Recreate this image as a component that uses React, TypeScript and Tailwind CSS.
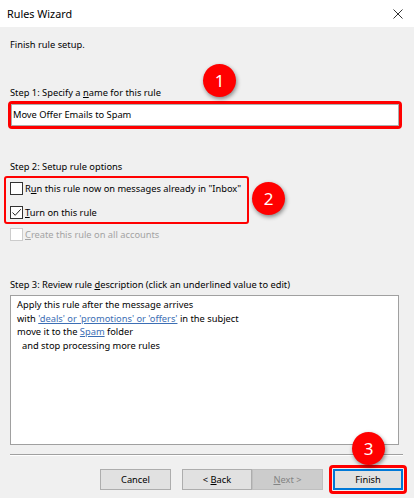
export default function App() {
  return (
    <div className="relative w-[414px] h-[498px] overflow-hidden bg-[#f0f0f0] font-['Noto_Sans',sans-serif] text-[9.3px] leading-[16px] text-black">
      <header className="h-[27px] bg-white flex items-center justify-between pl-[7px] pr-[11px] text-[10.8px]">
        <span>Rules Wizard</span>
        <svg width="10" height="10" viewBox="0 0 10 10" className="mt-[1px]">
          <path d="M0.5 0.5L9.5 9.5M9.5 0.5L0.5 9.5" stroke="#333" strokeWidth="1" fill="none" />
        </svg>
      </header>

      <div className="px-[10px] whitespace-nowrap">
        <p className="mt-[10px]">Finish rule setup.</p>

        <p className="mt-[32px]">
          Step 1: Specify a <span className="underline">n</span>ame for this rule
        </p>
        <div className="-ml-[2px] mr-[2px] border-[3px] border-[#ff0000] rounded-[4px]">
          <div className="h-[22px] bg-white border border-[#adadad] flex items-center px-[1px]">
            Move Offer Emails to Spam
          </div>
        </div>

        <p className="mt-[30px]">Step 2: Setup rule options</p>
        <div className="mt-[1px] -ml-[6px] w-[245px] border-2 border-[#ff0000] rounded-[3px] pt-[4px] pb-[3px] pl-[4px] flex flex-col gap-[11px]">
          <CheckRow label={<>R<span className="underline">u</span>n this rule now on messages already in "Inbox"</>} />
          <CheckRow checked label={<><span className="underline">T</span>urn on this rule</>} />
        </div>
        <div className="mt-[4px]">
          <CheckRow disabled label={<><span className="underline">C</span>reate this rule on all accounts</>} />
        </div>

        <p className="mt-[36px]">
          Step 3: Review rule <span className="underline">d</span>escription (click an underlined value to edit)
        </p>
        <div className="mt-[2px] mr-[5px] h-[150px] bg-white border border-[#a0a0a0] pl-[6px] pt-[2px] leading-[13.5px]">
          <p>Apply this rule after the message arrives</p>
          <p>
            with <span className="text-[#3c6eb4] underline">'deals' or 'promotions' or 'offers'</span> in the subject
          </p>
          <p>
            move it to the <span className="text-[#3c6eb4] underline">Spam</span> folder
          </p>
          <p className="pl-[5px]">and stop processing more rules</p>
        </div>

        <div className="mt-[9px] mr-[1px] border-t border-[#a0a0a0] border-b border-b-white" />
      </div>

      <div className="mt-[9px] flex items-start justify-end pr-[7px] whitespace-nowrap">
        <Button className="mt-[4px] w-[71px]">Cancel</Button>
        <Button className="mt-[4px] ml-[11px] w-[70px]">
          <span>
            &lt; <span className="underline">B</span>ack
          </span>
        </Button>
        <Button disabled className="mt-[4px] w-[71px]">
          <span>
            <span className="underline">N</span>ext &gt;
          </span>
        </Button>
        <div className="ml-[6px] border-[3px] border-[#ff0000] rounded-[4px] p-[1px]">
          <button className="w-[70px] h-[21px] bg-[#e1e1e1] border-2 border-[#0078d7] flex items-center justify-center">
            Finish
          </button>
        </div>
      </div>

      <Badge n="1" className="left-[203px] top-[64px]" />
      <Badge n="2" className="left-[252px] top-[182px]" />
      <Badge n="3" className="left-[352px] top-[432px]" />
    </div>
  );
}

function CheckRow({
  label,
  checked = false,
  disabled = false,
}: {
  label: React.ReactNode;
  checked?: boolean;
  disabled?: boolean;
}) {
  return (
    <div className={`flex items-center h-[13px] gap-[2px] ${disabled ? "text-[#a3a3a3]" : ""}`}>
      <span
        className={`w-[13px] h-[13px] shrink-0 bg-white border ${disabled ? "border-[#cccccc]" : "border-[#333333]"} flex items-center justify-center`}
      >
        {checked && (
          <svg width="11" height="11" viewBox="0 0 11 11">
            <path d="M1.5 5.5L4.2 8.3L9.8 2.2" stroke="#222" strokeWidth="1" fill="none" />
          </svg>
        )}
      </span>
      <span>{label}</span>
    </div>
  );
}

function Button({
  children,
  className = "",
  disabled = false,
}: {
  children: React.ReactNode;
  className?: string;
  disabled?: boolean;
}) {
  return (
    <button
      className={`h-[21px] flex items-center justify-center border ${
        disabled
          ? "bg-[#cccccc] border-[#bfbfbf] text-[#838383]"
          : "bg-[#e1e1e1] border-[#adadad] text-black"
      } ${className}`}
    >
      {children}
    </button>
  );
}

function Badge({ n, className }: { n: string; className: string }) {
  return (
    <div
      className={`absolute w-[33px] h-[33px] rounded-full bg-[#ff0000] text-white text-[17px] flex items-center justify-center shadow-[1px_2px_4px_rgba(0,0,0,0.45)] ${className}`}
    >
      {n}
    </div>
  );
}
